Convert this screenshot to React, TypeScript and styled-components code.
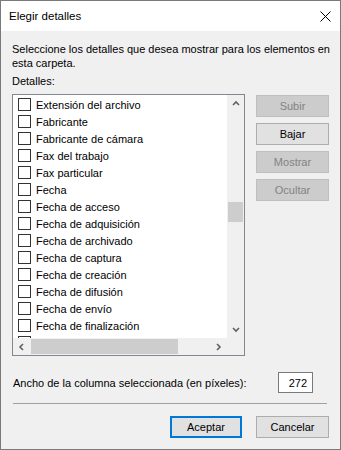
import React from "react";
import styled, { createGlobalStyle } from "styled-components";

const GlobalStyle = createGlobalStyle`
  body {
    margin: 0;
    background: #f0f0f0;
    font-family: "Segoe UI", "Liberation Sans", Arial, sans-serif;
  }
`;

const Window = styled.div`
  box-sizing: border-box;
  width: 341px;
  height: 450px;
  border: 1px solid #7a7a7a;
  display: flex;
  flex-direction: column;
  background: #f0f0f0;
  font-size: 11px;
  color: #000;
`;

const TitleBar = styled.div`
  height: 30px;
  background: #fff;
  display: flex;
  align-items: center;
  justify-content: space-between;
  padding: 0 9px 0 8px;
  font-size: 11.5px;
  flex-shrink: 0;
`;

const Body = styled.div`
  flex: 1;
  display: flex;
  flex-direction: column;
  padding: 11px 10px 0 11px;
`;

const Description = styled.p`
  margin: 0;
  line-height: 14px;
`;

const Label = styled.div`
  line-height: 16px;
  margin-top: 3px;
`;

const MainRow = styled.div`
  display: flex;
  gap: 11px;
  margin-top: 5px;
`;

const ListBox = styled.div`
  box-sizing: border-box;
  width: 233px;
  height: 262px;
  border: 1px solid #828790;
  background: #fff;
  display: grid;
  grid-template-columns: 1fr 17px;
  grid-template-rows: 1fr 17px;
`;

const Viewport = styled.div`
  overflow: hidden;
  padding: 1px 0 0 5px;
`;

const Row = styled.div`
  height: 17px;
  display: flex;
  align-items: center;
  gap: 5px;
  white-space: nowrap;
`;

const Check = styled.span`
  box-sizing: border-box;
  width: 13px;
  height: 13px;
  border: 1px solid #333;
  background: #fff;
  flex-shrink: 0;
`;

const VScroll = styled.div`
  background: #f0f0f0;
  display: flex;
  flex-direction: column;
  align-items: center;
`;

const HScroll = styled.div`
  background: #f0f0f0;
  display: flex;
  align-items: center;
`;

const Corner = styled.div`
  background: #f0f0f0;
`;

const ArrowCell = styled.div`
  width: 17px;
  height: 17px;
  display: flex;
  align-items: center;
  justify-content: center;
  flex-shrink: 0;
`;

const VThumb = styled.div`
  width: 15px;
  height: 20px;
  margin: 90px 1px 0 0;
  background: #cdcdcd;
`;

const HThumb = styled.div`
  width: 147px;
  height: 15px;
  margin-left: 1px;
  background: #cdcdcd;
`;

const Spacer = styled.div`
  flex: 1;
`;

const ButtonColumn = styled.div`
  display: flex;
  flex-direction: column;
  gap: 6px;
  padding-top: 1px;
`;

const Button = styled.button<{ $disabled?: boolean; $default?: boolean }>`
  box-sizing: border-box;
  width: ${(p) => (p.$default ? "72px" : "73px")};
  height: 22px;
  padding: 0;
  font-family: inherit;
  font-size: 11px;
  border: ${(p) =>
    p.$default
      ? "2px solid #0078d7"
      : p.$disabled
      ? "1px solid #bfbfbf"
      : "1px solid #adadad"};
  background: ${(p) => (p.$disabled ? "#cccccc" : "#e1e1e1")};
  color: ${(p) => (p.$disabled ? "#838383" : "#000")};
`;

const WidthRow = styled.div`
  display: flex;
  align-items: center;
  margin-top: 16px;
  padding-left: 1px;
`;

const WidthInput = styled.div`
  box-sizing: border-box;
  width: 35px;
  height: 21px;
  margin-left: auto;
  margin-right: 17px;
  border: 1px solid #7a7a7a;
  background: #fff;
  display: flex;
  align-items: center;
  justify-content: flex-end;
  padding-right: 5px;
`;

const Separator = styled.div`
  height: 1px;
  background: #a0a0a0;
  margin: 10px 3px 0 1px;
`;

const Footer = styled.div`
  display: flex;
  justify-content: flex-end;
  gap: 14px;
  margin-top: 12px;
  padding-right: 1px;
`;

const Chevron = ({ dir }: { dir: "up" | "down" | "left" | "right" }) => {
  const d = {
    up: "M1 5 L4 2 L7 5",
    down: "M1 2 L4 5 L7 2",
    left: "M5 1 L2 4 L5 7",
    right: "M2 1 L5 4 L2 7",
  }[dir];
  const horiz = dir === "left" || dir === "right";
  return (
    <svg width={horiz ? 7 : 8} height={horiz ? 8 : 7} viewBox={horiz ? "0 0 7 8" : "0 0 8 7"}>
      <path d={d} fill="none" stroke="#606060" strokeWidth="1.6" />
    </svg>
  );
};

const CloseIcon = () => (
  <svg width="11" height="11" viewBox="0 0 11 11">
    <path d="M0.5 0.5 L10.5 10.5 M10.5 0.5 L0.5 10.5" stroke="#000" strokeWidth="1" />
  </svg>
);

const items = [
  "Extensión del archivo",
  "Fabricante",
  "Fabricante de cámara",
  "Fax del trabajo",
  "Fax particular",
  "Fecha",
  "Fecha de acceso",
  "Fecha de adquisición",
  "Fecha de archivado",
  "Fecha de captura",
  "Fecha de creación",
  "Fecha de difusión",
  "Fecha de envío",
  "Fecha de finalización",
];

export default function App() {
  return (
    <>
      <GlobalStyle />
      <Window>
        <TitleBar>
          <span>Elegir detalles</span>
          <CloseIcon />
        </TitleBar>
        <Body>
          <Description>
            Seleccione los detalles que desea mostrar para los elementos en esta carpeta.
          </Description>
          <Label>Detalles:</Label>
          <MainRow>
            <ListBox>
              <Viewport>
                {items.map((item) => (
                  <Row key={item}>
                    <Check />
                    <span>{item}</span>
                  </Row>
                ))}
                {/* next row is scrolled almost out of view: only its box edge shows */}
                <Row>
                  <Check />
                </Row>
              </Viewport>
              <VScroll>
                <ArrowCell>
                  <Chevron dir="up" />
                </ArrowCell>
                <VThumb />
                <Spacer />
                <ArrowCell>
                  <Chevron dir="down" />
                </ArrowCell>
              </VScroll>
              <HScroll>
                <ArrowCell>
                  <Chevron dir="left" />
                </ArrowCell>
                <HThumb />
                <Spacer />
                <ArrowCell>
                  <Chevron dir="right" />
                </ArrowCell>
              </HScroll>
              <Corner />
            </ListBox>
            <ButtonColumn>
              <Button $disabled>Subir</Button>
              <Button>Bajar</Button>
              <Button $disabled>Mostrar</Button>
              <Button $disabled>Ocultar</Button>
            </ButtonColumn>
          </MainRow>
          <WidthRow>
            <span>Ancho de la columna seleccionada (en píxeles):</span>
            <WidthInput>272</WidthInput>
          </WidthRow>
          <Separator />
          <Footer>
            <Button $default>Aceptar</Button>
            <Button>Cancelar</Button>
          </Footer>
        </Body>
      </Window>
    </>
  );
}
